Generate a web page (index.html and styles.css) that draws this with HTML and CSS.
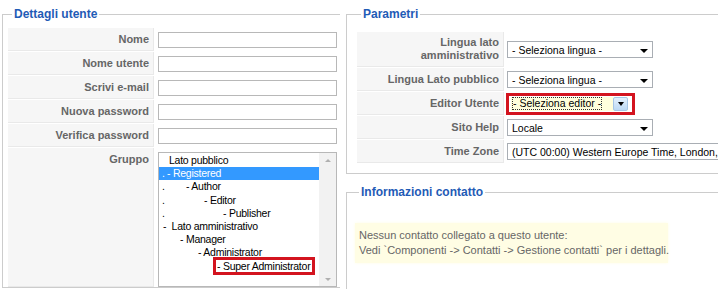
FILE: index.html
```html
<!DOCTYPE html>
<html lang="it">
<head>
  <meta charset="UTF-8" />
  <meta name="viewport" content="width=device-width, initial-scale=1.0"/>
  <title>Modifica utente</title>
  <link rel="stylesheet" href="styles.css">
</head>
<body>

  <div class="colonne">

    <!-- DETTAGLI UTENTE -->
    <fieldset class="riquadro riquadro-utente">
      <legend>Dettagli utente</legend>
      <div class="griglia griglia-utente">
        <div class="key">Nome</div>
        <div class="campo"><input type="text" class="testo"></div>

        <div class="key">Nome utente</div>
        <div class="campo"><input type="text" class="testo"></div>

        <div class="key">Scrivi e-mail</div>
        <div class="campo"><input type="text" class="testo"></div>

        <div class="key">Nuova password</div>
        <div class="campo"><input type="password" class="testo"></div>

        <div class="key">Verifica password</div>
        <div class="campo"><input type="password" class="testo"></div>

        <div class="key">Gruppo</div>
        <div class="campo campo-lista">
          <div class="lista">
            <div class="voci">
              <div class="voce"><span class="spazio s-pubblico"></span>Lato pubblico</div>
              <div class="voce scelta"><span class="punto p1">.</span>- Registered</div>
              <div class="voce"><span class="punto p2">.</span>- Author</div>
              <div class="voce"><span class="punto p3">.</span>- Editor</div>
              <div class="voce"><span class="punto p4">.</span>- Publisher</div>
              <div class="voce"><span class="spazio s-admin"></span>-&nbsp;&nbsp;Lato amministrativo</div>
              <div class="voce"><span class="spazio s1"></span>- Manager</div>
              <div class="voce"><span class="spazio s2"></span>- Administrator</div>
              <div class="voce"><span class="spazio s3"></span><span class="segnato">- Super Administrator</span></div>
            </div>
            <div class="barra">
              <span class="su"></span>
              <span class="giu"></span>
            </div>
          </div>
        </div>
      </div>
    </fieldset>

    <div class="colonna-destra">

      <!-- PARAMETRI -->
      <fieldset class="riquadro riquadro-parametri">
        <legend>Parametri</legend>
        <div class="griglia griglia-parametri">
          <div class="key key-doppia">Lingua lato<br>amministrativo</div>
          <div class="campo">
            <div class="select"><span>- Seleziona lingua -</span><span class="freccia"></span></div>
          </div>

          <div class="key">Lingua Lato pubblico</div>
          <div class="campo">
            <div class="select"><span>- Seleziona lingua -</span><span class="freccia"></span></div>
          </div>

          <div class="key">Editor Utente</div>
          <div class="campo">
            <div class="evidenzia">
              <div class="select select-attivo">
                <span class="focus">- Seleziona editor -</span>
                <span class="bottone"><span class="freccia"></span></span>
              </div>
            </div>
          </div>

          <div class="key">Sito Help</div>
          <div class="campo">
            <div class="select select-help"><span>Locale</span><span class="freccia"></span></div>
          </div>

          <div class="key">Time Zone</div>
          <div class="campo">
            <div class="select select-zona"><span>(UTC 00:00) Western Europe Time, London, Lisbon, Casablanca</span></div>
          </div>
        </div>
      </fieldset>

      <!-- INFORMAZIONI CONTATTO -->
      <fieldset class="riquadro riquadro-contatto">
        <legend>Informazioni contatto</legend>
        <div class="avviso">
          Nessun contatto collegato a questo utente:<br>
          Vedi `Componenti -&gt; Contatti -&gt; Gestione contatti` per i dettagli.
        </div>
      </fieldset>

    </div>
  </div>

</body>
</html>
```

FILE: styles.css
```css
* {
  box-sizing: border-box;
  margin: 0;
  padding: 0;
}

html, body {
  overflow: hidden;
}

body {
  background-color: #fff;
  color: #333;
  font-family: "Liberation Sans", Arial, sans-serif;
  font-size: 11px;
}

.colonne {
  display: flex;
  align-items: flex-start;
  gap: 6px;
  padding: 7px 0 0 2px;
  width: 1200px;
}

/* --- RIQUADRI (fieldset) --- */
.riquadro {
  border: 1px solid #ccc;
  min-width: 0;
}

.riquadro legend {
  font-size: 12px;
  font-weight: bold;
  line-height: 14px;
  color: #1f5bb6;
  padding: 0 2px;
  margin-left: 4px;
}

.riquadro-utente {
  width: 338px;
  border-right: none;
  padding: 7px 0 0 5px;
}

.colonna-destra {
  width: 420px;
}

.riquadro-parametri {
  padding: 11px 0 10px 10px;
}

.riquadro-contatto {
  margin-top: 11px;
  padding: 24px 0 40px 8px;
}

/* --- GRIGLIE --- */
.griglia {
  display: grid;
  row-gap: 1px;
}

.griglia-utente {
  grid-template-columns: 146px 179px;
  column-gap: 4px;
}

.griglia-parametri {
  grid-template-columns: 147px 260px;
  column-gap: 3px;
}

.key {
  background-color: #f6f6f6;
  border-right: 1px solid #e9e9e9;
  border-bottom: 1px solid #e9e9e9;
  text-align: right;
  padding: 4px 4px 4px 0;
  line-height: 14px;
  font-weight: bold;
  color: #666;
}

.key-doppia {
  line-height: 13px;
}

.campo {
  display: flex;
  align-items: center;
}

.campo-lista {
  align-items: flex-start;
  padding-top: 4px;
}

.testo {
  width: 179px;
  height: 16px;
  border: 1px solid #b8b8b8;
  background: #fff;
}

/* --- LISTA GRUPPI --- */
.lista {
  display: flex;
  width: 179px;
  height: 135px;
  border: 1px solid #b8b8b8;
  background: #fff;
}

.voci {
  flex: 1;
  padding-top: 1px;
  font-size: 10.5px;
  letter-spacing: -0.25px;
  line-height: 13.2px;
  color: #000;
  white-space: nowrap;
}

.voce {
  padding-left: 3px;
}

.voce.scelta {
  background-color: #3399ff;
  color: #fff;
}

.punto, .spazio {
  display: inline-block;
}
.p1 { width: 5px; }
.p2 { width: 24px; }
.p3 { width: 42px; }
.p4 { width: 61px; }
.s-pubblico { width: 7px; }
.s-admin { width: 1px; }
.s1 { width: 18px; }
.s2 { width: 36px; }
.s3 { width: 54px; }

.segnato {
  outline: 3px solid #d3141f;
  outline-offset: 0;
  padding: 0 2px 0 1px;
}

.barra {
  width: 17px;
  background-color: #f2f2f2;
  display: flex;
  flex-direction: column;
  justify-content: space-between;
  align-items: center;
  padding: 6px 0 5px;
}

.su, .giu {
  width: 0;
  height: 0;
  border-left: 3px solid transparent;
  border-right: 3px solid transparent;
}
.su { border-bottom: 3px solid #b0b0b0; }
.giu { border-top: 3px solid #b0b0b0; }

/* --- SELECT --- */
.select {
  display: flex;
  align-items: center;
  justify-content: space-between;
  width: 146px;
  height: 17px;
  border: 1px solid #a9aeb4;
  background: #fff;
  padding: 0 4px 0 4px;
  font-size: 10.5px;
  color: #000;
  white-space: nowrap;
  overflow: hidden;
}

.freccia {
  width: 0;
  height: 0;
  margin-top: 2px;
  border-left: 4px solid transparent;
  border-right: 4px solid transparent;
  border-top: 4px solid #000;
}

.select-zona {
  width: 260px;
}

.evidenzia {
  margin-left: -1px;
  border: 3px solid #d3141f;
  padding: 0 3px 0 0;
  background: #fff;
}

.select-attivo {
  width: 119px;
  height: 16px;
  margin-left: 1px;
  border-color: #fff;
  background-color: #ffffdc;
  padding: 0 0 0 1px;
}

.focus {
  outline: 1px dotted #333;
  outline-offset: -1px;
  padding: 0 1px;
  line-height: 13px;
}

.bottone {
  display: flex;
  align-items: center;
  justify-content: center;
  width: 15px;
  height: 14px;
  background: linear-gradient(#e3f0fc, #bcd9f4);
  border: 1px solid #a7c6e6;
  border-radius: 2px;
}

.bottone .freccia {
  margin-top: 1px;
  border-left-width: 3.5px;
  border-right-width: 3.5px;
}

/* --- AVVISO CONTATTO --- */
.avviso {
  width: 313px;
  background-color: #fffde4;
  box-shadow: 0 0 3px #fffde4;
  padding: 5px 4px;
  line-height: 15px;
  color: #666;
  font-size: 11px;
  white-space: nowrap;
}
```
